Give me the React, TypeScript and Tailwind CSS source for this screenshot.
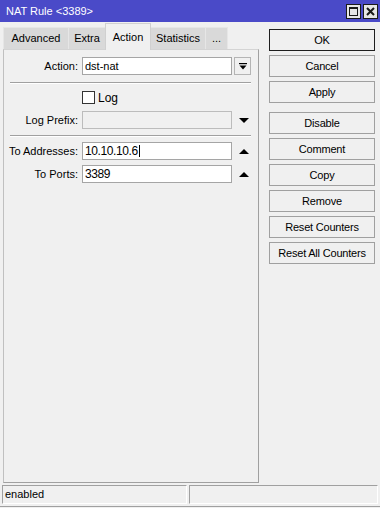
import React from "react";

function DownBar() {
  return (
    <svg width="8" height="7" viewBox="0 0 8 7">
      <rect x="0" y="0" width="8" height="1.2" fill="#000" />
      <path d="M0.5 2.5h7L4 6.5z" fill="#000" />
    </svg>
  );
}

function Tri({ up }: { up?: boolean }) {
  return (
    <svg width="10" height="5" viewBox="0 0 10 5">
      {up ? <path d="M0 5h10L5 0z" fill="#000" /> : <path d="M0 0h10L5 5z" fill="#000" />}
    </svg>
  );
}

function Btn({ label, def, mt }: { label: string; def?: boolean; mt: string }) {
  return (
    <div
      className={
        "h-[22px] w-[106px] flex items-center justify-center bg-[#f0f0f0] border " +
        (def ? "border-[#1e1e1e] " : "border-[#a0a0a0] ") +
        mt
      }
    >
      <span className="tracking-[-0.2px]">{label}</span>
    </div>
  );
}

export default function App() {
  return (
    <div className="w-[380px] h-[508px] bg-[#f0f0f0] flex flex-col font-['Liberation_Sans',Arial,sans-serif] text-[11px] text-black overflow-hidden leading-none">
      {/* Title bar */}
      <div className="h-[22px] bg-[#4a4ac8] flex items-center pl-[6px] pr-[2px] shrink-0">
        <span className="text-white text-[11px]">NAT Rule &lt;3389&gt;</span>
        <div className="ml-auto flex gap-[2px]">
          <div className="w-[15px] h-[15px] bg-[#e6e6e6] border border-[#1a1a1a] flex items-center justify-center">
            <div className="w-[9px] h-[9px] border border-[#1a1a1a] border-t-2" />
          </div>
          <div className="w-[15px] h-[15px] bg-[#e6e6e6] border border-[#1a1a1a] flex items-center justify-center">
            <svg width="9" height="9" viewBox="0 0 9 9">
              <path d="M1 1L8 8M8 1L1 8" stroke="#1a1a1a" strokeWidth="2" />
            </svg>
          </div>
        </div>
      </div>

      {/* Body */}
      <div className="flex shrink-0">
        <div className="ml-[3px] w-[256px] flex flex-col">
          {/* Tabs */}
          <div className="h-[27px] flex items-end">
            <div className="w-[65px] h-[22px] bg-[#d9d9d9] border-t border-l border-[#e6e6e6] flex items-center justify-center">
              Advanced
            </div>
            <div className="w-[37px] h-[22px] bg-[#d9d9d9] border-t border-l border-[#e6e6e6] flex items-center justify-center">
              Extra
            </div>
            <div className="relative z-10 -mb-px w-[46px] h-[27px] bg-[#f0f0f0] border-t border-l border-r border-[#d0d0d0] flex items-center justify-center">
              Action
            </div>
            <div className="w-[55px] h-[22px] bg-[#d9d9d9] border-t border-r border-[#e6e6e6] flex items-center justify-center">
              Statistics
            </div>
            <div className="w-[22px] h-[22px] bg-[#d9d9d9] border-t border-r border-[#e6e6e6] flex items-center justify-center">
              ...
            </div>
          </div>

          {/* Panel */}
          <div className="h-[434px] border border-t-[#d4d4d4] border-l-[#c0c0c0] border-r-[#a0a0a0] border-b-[#a0a0a0] flex flex-col">
            {/* Action row */}
            <div className="mt-[7px] h-[18px] flex items-center">
              <div className="w-[74px] text-right">Action:</div>
              <div className="ml-[4px] w-[150px] h-[18px] bg-white border border-[#a5a5a5] flex items-center pl-[2px]">
                dst-nat
              </div>
              <div className="ml-[2px] w-[17px] h-[18px] border border-[#b4b4b4] bg-[#f0f0f0] flex items-center justify-center">
                <DownBar />
              </div>
            </div>

            <div className="mt-[7px] ml-[6px] w-[241px] h-px bg-[#a0a0a0]" />
            <div className="ml-[6px] w-[241px] h-px bg-white" />

            {/* Log checkbox */}
            <div className="mt-[7px] h-[13px] flex items-center">
              <div className="ml-[78px] w-[13px] h-[13px] bg-white border border-[#333]" />
              <span className="ml-[3px] text-[12px]">Log</span>
            </div>

            {/* Log Prefix */}
            <div className="mt-[7px] h-[18px] flex items-center">
              <div className="w-[74px] text-right">Log Prefix:</div>
              <div className="ml-[4px] w-[150px] h-[18px] bg-[#f0f0f0] border border-[#bcbcbc]" />
              <div className="ml-[6px] w-[12px] flex items-center justify-center">
                <Tri />
              </div>
            </div>

            <div className="mt-[6px] ml-[6px] w-[241px] h-px bg-[#a0a0a0]" />
            <div className="ml-[6px] w-[241px] h-px bg-white" />

            {/* To Addresses */}
            <div className="mt-[5px] h-[18px] flex items-center">
              <div className="w-[74px] text-right">To Addresses:</div>
              <div className="ml-[4px] w-[150px] h-[18px] bg-white border border-[#a5a5a5] flex items-center pl-[2px] text-[12px] tracking-[-0.4px]">
                10.10.10.6
                <span className="ml-px w-px h-[12px] bg-black" />
              </div>
              <div className="ml-[6px] w-[12px] flex items-center justify-center">
                <Tri up />
              </div>
            </div>

            {/* To Ports */}
            <div className="mt-[5px] h-[18px] flex items-center">
              <div className="w-[74px] text-right">To Ports:</div>
              <div className="ml-[4px] w-[150px] h-[18px] bg-white border border-[#a5a5a5] flex items-center pl-[2px] text-[12px] tracking-[-0.4px]">
                3389
              </div>
              <div className="ml-[6px] w-[12px] flex items-center justify-center">
                <Tri up />
              </div>
            </div>
          </div>
        </div>

        {/* Right buttons */}
        <div className="ml-[10px] pt-[7px] flex flex-col">
          <Btn label="OK" def mt="mt-0" />
          <Btn label="Cancel" mt="mt-[4px]" />
          <Btn label="Apply" mt="mt-[4px]" />
          <Btn label="Disable" mt="mt-[9px]" />
          <Btn label="Comment" mt="mt-[4px]" />
          <Btn label="Copy" mt="mt-[4px]" />
          <Btn label="Remove" mt="mt-[4px]" />
          <Btn label="Reset Counters" mt="mt-[4px]" />
          <Btn label="Reset All Counters" mt="mt-[4px]" />
        </div>
      </div>

      {/* Status bar */}
      <div className="mt-[2px] h-[19px] flex px-[2px] gap-[2px] shrink-0">
        <div className="w-[185px] h-[19px] border border-t-[#a0a0a0] border-l-[#a0a0a0] border-r-white border-b-white flex items-center pl-[2px]">
          enabled
        </div>
        <div className="w-[189px] h-[19px] border border-t-[#a0a0a0] border-l-[#a0a0a0] border-r-white border-b-white" />
      </div>
      <div className="mt-[2px] h-px bg-[#a0a0a0] shrink-0" />
    </div>
  );
}
